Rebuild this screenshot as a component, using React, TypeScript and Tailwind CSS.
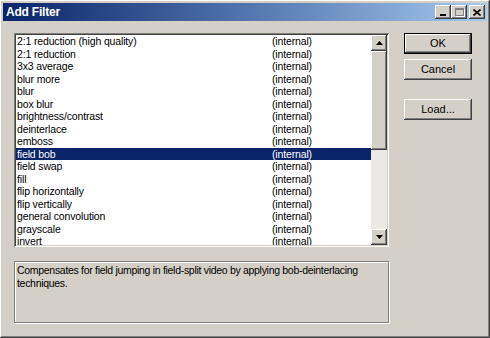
import React from "react";

const filters = [
  "2:1 reduction (high quality)",
  "2:1 reduction",
  "3x3 average",
  "blur more",
  "blur",
  "box blur",
  "brightness/contrast",
  "deinterlace",
  "emboss",
  "field bob",
  "field swap",
  "fill",
  "flip horizontally",
  "flip vertically",
  "general convolution",
  "grayscale",
  "invert",
];

const raised =
  "shadow-[inset_-1px_-1px_#404040,inset_1px_1px_#ffffff,inset_-2px_-2px_#808080,inset_2px_2px_#d4d0c8]";
const sunken =
  "shadow-[inset_1px_1px_#808080,inset_-1px_-1px_#ffffff,inset_2px_2px_#404040,inset_-2px_-2px_#d4d0c8]";

function TitleButton({ children, gap }: { children: React.ReactNode; gap?: boolean }) {
  return (
    <div className={`w-[16px] h-[14px] bg-[#d4d0c8] flex items-center justify-center ${raised} ${gap ? "ml-[2px]" : ""}`}>
      {children}
    </div>
  );
}

function Button({ label, def }: { label: string; def?: boolean }) {
  return (
    <div
      className={`w-[68px] h-[21px] bg-[#d4d0c8] flex items-center justify-center text-[11px] text-black ${
        def
          ? "shadow-[inset_0_0_0_1px_#000000,inset_-2px_-2px_#404040,inset_2px_2px_#ffffff,inset_-3px_-3px_#808080]"
          : raised
      }`}
    >
      {label}
    </div>
  );
}

function ArrowButton({ up }: { up?: boolean }) {
  return (
    <div className={`w-[16px] h-[16px] bg-[#d4d0c8] flex items-center justify-center shrink-0 ${raised}`}>
      <svg width="7" height="4" viewBox="0 0 7 4">
        {up ? <path d="M3.5 0 L7 4 L0 4 Z" fill="#000" /> : <path d="M0 0 L7 0 L3.5 4 Z" fill="#000" />}
      </svg>
    </div>
  );
}

export default function App() {
  return (
    <div
      className={`w-[490px] h-[338px] bg-[#d4d0c8] flex flex-col p-[3px] overflow-hidden ${raised}`}
      style={{ fontFamily: '"Liberation Sans", Arial, sans-serif' }}
    >
      <div className="h-[18px] bg-gradient-to-r from-[#0a246a] to-[#a6caf0] flex items-center justify-between pl-[3px] pr-[2px]">
        <span className="text-white font-bold text-[12px] leading-none tracking-[-0.2px]">Add Filter</span>
        <div className="flex">
          <TitleButton>
            <div className="w-[6px] h-[2px] bg-black mt-[6px] mr-[1px]" />
          </TitleButton>
          <TitleButton>
            <div className="w-[9px] h-[8px] border border-[#808080] border-t-2 shadow-[1px_1px_#ffffff]" />
          </TitleButton>
          <TitleButton gap>
            <svg width="8" height="7" viewBox="0 0 8 7">
              <path d="M0.5 0.5 L7.5 6.5 M7.5 0.5 L0.5 6.5" stroke="#000" strokeWidth="1.6" />
            </svg>
          </TitleButton>
        </div>
      </div>

      <div className="flex pl-[11px] pt-[12px] gap-[15px]">
        <div className="flex flex-col gap-[14px]">
          <div className={`w-[375px] h-[214px] bg-white p-[2px] flex ${sunken}`}>
            <div className="flex-1 overflow-hidden">
              {filters.map((f) => {
                const sel = f === "field bob";
                return (
                  <div
                    key={f}
                    className={`h-[12.5px] flex items-center text-[10.5px] leading-none tracking-[-0.15px] pl-[1px] ${
                      sel ? "bg-[#0a246a] text-white" : "text-black"
                    }`}
                  >
                    <span className="w-[255px] whitespace-nowrap">{f}</span>
                    <span>(internal)</span>
                  </div>
                );
              })}
            </div>
            <div className="w-[16px] flex flex-col bg-[#ebe9e5]">
              <ArrowButton up />
              <div className={`h-[99px] bg-[#d4d0c8] ${raised}`} />
              <div className="flex-1" />
              <ArrowButton />
            </div>
          </div>
          <div className="w-[375px] h-[62px] border border-[#808080] shadow-[1px_1px_#ffffff,inset_1px_1px_#ffffff] px-[2px] pt-[2px] text-[10.5px] leading-[13px] tracking-[-0.3px] text-black whitespace-nowrap">
            Compensates for field jumping in field-split video by applying bob-deinterlacing
            <br />
            techniques.
          </div>
        </div>
        <div className="flex flex-col">
          <Button label="OK" def />
          <div className="h-[5px]" />
          <Button label="Cancel" />
          <div className="h-[19px]" />
          <Button label="Load..." />
        </div>
      </div>
    </div>
  );
}
